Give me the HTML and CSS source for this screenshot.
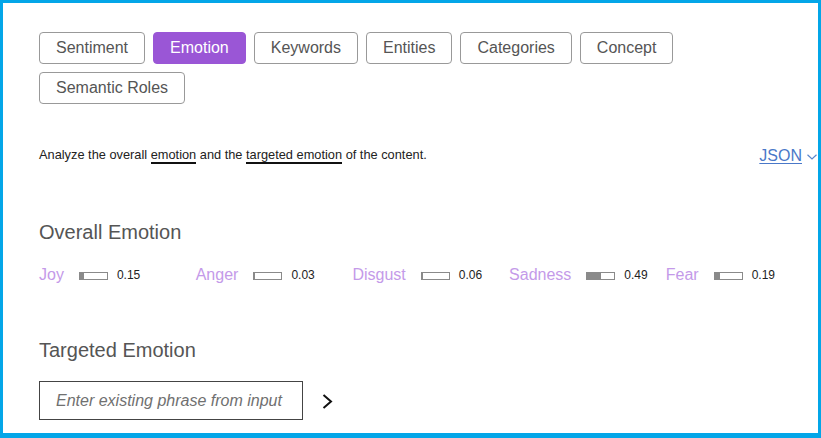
FILE: index.html
```html
<!DOCTYPE html>
<html>
<head>
<meta charset="utf-8">
<link rel="stylesheet" href="styles.css">
</head>
<body>
<div class="frame">
  <div class="tabs">
    <button class="tab">Sentiment</button>
    <button class="tab active">Emotion</button>
    <button class="tab">Keywords</button>
    <button class="tab">Entities</button>
    <button class="tab">Categories</button>
    <button class="tab">Concept</button>
    <button class="tab">Semantic Roles</button>
  </div>

  <div class="desc-row">
    <p class="desc">Analyze the overall <span class="ul">emotion</span> and the <span class="ul">targeted emotion</span> of the content.</p>
    <a class="json">JSON<svg class="json-chev" width="10" height="6" viewBox="0 0 10 6"><polyline points="0.5,0.8 5,5 9.5,0.8" fill="none" stroke="#5a86cc" stroke-width="1.2"/></svg></a>
  </div>

  <h2 class="heading overall">Overall Emotion</h2>
  <div class="emotions">
    <div class="emo"><span class="emo-label">Joy</span><span class="bar"><span class="fill" style="width:15%"></span></span><span class="val">0.15</span></div>
    <div class="emo"><span class="emo-label">Anger</span><span class="bar"><span class="fill" style="width:3%"></span></span><span class="val">0.03</span></div>
    <div class="emo"><span class="emo-label">Disgust</span><span class="bar"><span class="fill" style="width:6%"></span></span><span class="val">0.06</span></div>
    <div class="emo"><span class="emo-label">Sadness</span><span class="bar"><span class="fill" style="width:49%"></span></span><span class="val">0.49</span></div>
    <div class="emo"><span class="emo-label">Fear</span><span class="bar"><span class="fill" style="width:19%"></span></span><span class="val">0.19</span></div>
  </div>

  <h2 class="heading targeted">Targeted Emotion</h2>
  <div class="target-row">
    <input class="phrase" type="text" placeholder="Enter existing phrase from input">
    <svg class="go" width="11" height="15" viewBox="0 0 11 15"><polyline points="1.5,1 9,7.5 1.5,14" fill="none" stroke="#111" stroke-width="2"/></svg>
  </div>
</div>
</body>
</html>
```

FILE: styles.css
```css
* { box-sizing: border-box; }
html, body { margin: 0; padding: 0; background: #fff; }
body { font-family: "Liberation Sans", Arial, sans-serif; }

.frame {
  width: 821px;
  height: 438px;
  border-style: solid;
  border-color: #03a6e8;
  border-width: 3px 3px 5px 3px;
  padding: 29px 1px 0 36px;
  overflow: hidden;
}

.tabs {
  display: flex;
  flex-wrap: wrap;
  gap: 8px 8px;
  width: 650px;
}

.tab {
  height: 32px;
  padding: 0 16px;
  border: 1px solid #999;
  border-radius: 4px;
  background: #fff;
  color: #555;
  font-family: "Liberation Sans", Arial, sans-serif;
  font-size: 16px;
  line-height: 18px;
}
.tab.active {
  background: #9a56d6;
  border-color: #9a56d6;
  color: #fff;
}

.desc-row {
  display: flex;
  justify-content: space-between;
  align-items: flex-start;
  margin-top: 44px;
}
.desc {
  margin: 0;
  font-size: 12.8px;
  line-height: 14px;
  color: #222;
}
.ul {
  border-bottom: 2px solid #111;
}
.json {
  margin-top: -1px;
  display: flex;
  align-items: center;
  gap: 5px;
  font-size: 16px;
  line-height: 18px;
  color: #4a78c8;
  text-decoration: underline;
  text-underline-offset: 2px;
}
.json-chev { margin-top: 1px; }

.heading {
  margin: 0;
  font-size: 20px;
  line-height: 24px;
  font-weight: normal;
  color: #555;
}
.overall { margin-top: 55px; }
.targeted { margin-top: 54px; }

.emotions {
  display: flex;
  margin-top: 22px;
}
.emo {
  display: flex;
  align-items: center;
  width: 156.7px;
  flex: none;
}
.emo-label {
  font-size: 16px;
  line-height: 18px;
  color: #c49ae9;
  margin-right: 15px;
}
.bar {
  display: block;
  width: 29px;
  height: 8px;
  border: 1px solid #8a8a8a;
  margin-right: 9px;
  margin-top: 1px;
}
.fill {
  display: block;
  height: 100%;
  background: #8a8a8a;
}
.val {
  font-size: 12px;
  line-height: 14px;
  color: #222;
}

.target-row {
  display: flex;
  align-items: center;
  gap: 19px;
  margin-top: 19px;
}
.phrase {
  width: 264px;
  height: 39px;
  border: 1px solid #444;
  border-radius: 0;
  padding: 0 16px;
  font-family: "Liberation Sans", Arial, sans-serif;
  font-size: 16px;
  font-style: italic;
  color: #333;
  outline: none;
}
.phrase::placeholder { color: #707070; font-style: italic; }
.go { margin-top: 1px; }
```
